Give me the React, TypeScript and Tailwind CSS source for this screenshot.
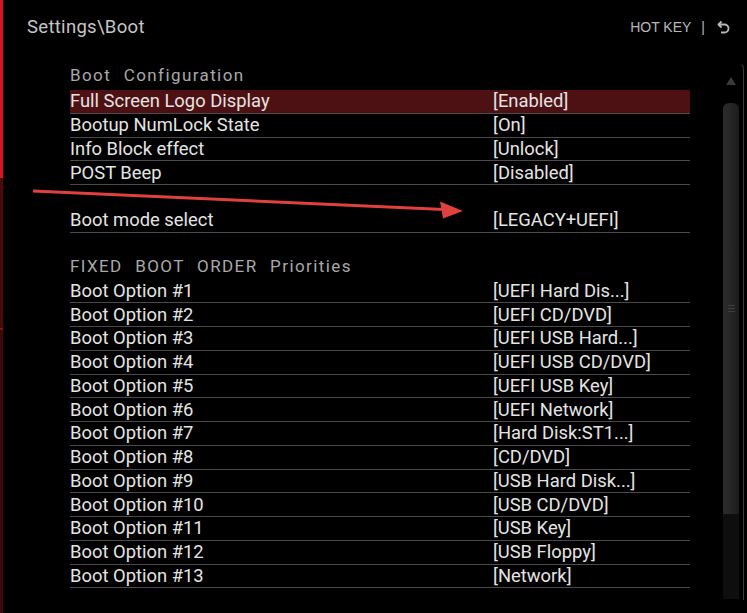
import React from 'react';

type Row = { label: string; value: string; active?: boolean };

const configRows: Row[] = [
  { label: 'Full Screen Logo Display', value: '[Enabled]', active: true },
  { label: 'Bootup NumLock State', value: '[On]' },
  { label: 'Info Block effect', value: '[Unlock]' },
  { label: 'POST Beep', value: '[Disabled]' },
];

const bootRows: Row[] = [
  { label: 'Boot Option #1', value: '[UEFI Hard Dis...]' },
  { label: 'Boot Option #2', value: '[UEFI CD/DVD]' },
  { label: 'Boot Option #3', value: '[UEFI USB Hard...]' },
  { label: 'Boot Option #4', value: '[UEFI USB CD/DVD]' },
  { label: 'Boot Option #5', value: '[UEFI USB Key]' },
  { label: 'Boot Option #6', value: '[UEFI Network]' },
  { label: 'Boot Option #7', value: '[Hard Disk:ST1...]' },
  { label: 'Boot Option #8', value: '[CD/DVD]' },
  { label: 'Boot Option #9', value: '[USB Hard Disk...]' },
  { label: 'Boot Option #10', value: '[USB CD/DVD]' },
  { label: 'Boot Option #11', value: '[USB Key]' },
  { label: 'Boot Option #12', value: '[USB Floppy]' },
  { label: 'Boot Option #13', value: '[Network]' },
];

const SettingRow = ({ label, value, active }: Row) => (
  <div className="h-[23.75px] flex flex-col">
    <div
      className={`flex-1 flex items-center text-[18.4px] leading-[20px] text-[#e4e4e4] whitespace-nowrap ${
        active ? 'bg-[#4e1113]' : ''
      }`}
    >
      <span className="w-[423px]">{label}</span>
      <span>{value}</span>
    </div>
    <div className="h-px bg-[#4a4a4a]" />
  </div>
);

const SectionTitle = ({ text, className }: { text: string; className: string }) => (
  <div className={className}>
    <div className="text-[17px] leading-[22px] text-[#a9a9a9] tracking-[1.4px] [word-spacing:7px] whitespace-nowrap">
      {text}
    </div>
  </div>
);

const BackIcon = () => (
  <svg width="13" height="14" viewBox="0 0 13 14" fill="none" stroke="#b8b8b8" strokeWidth="1.8">
    <path d="M4.5 1.5 L1.5 4.5 L4.5 7.5" strokeLinejoin="round" />
    <path d="M1.8 4.5 H7.5 a4 4 0 0 1 0 8 H4" />
  </svg>
);

const Scrollbar = () => (
  <div className="ml-[33px] mt-[7px] w-[21px] h-[538px] flex flex-col items-start border-r-[1.5px] border-t border-[#3c3c3c] rounded-tr-[7px] border-t-transparent">
    <div className="w-[16px] mt-[14px] flex justify-center">
      <div className="w-0 h-0 border-l-[5px] border-r-[5px] border-b-[8px] border-l-transparent border-r-transparent border-b-[#3a3a3a]" />
    </div>
    <div className="mt-[18px] w-[16px] h-[411px] rounded-t-[6px] bg-gradient-to-r from-[#2c2c2c] via-[#262626] to-[#1c1c1c] flex justify-center pt-[202px]">
      <div className="flex flex-col gap-[2px]">
        <div className="w-[7px] h-px bg-[#3e3e3e]" />
        <div className="w-[7px] h-px bg-[#3e3e3e]" />
        <div className="w-[7px] h-px bg-[#3e3e3e]" />
      </div>
    </div>
    <div className="w-[16px] h-[85px] bg-[#0e0e0e]" />
  </div>
);

export default function App() {
  return (
    <div className="relative w-[747px] h-[613px] bg-black overflow-hidden flex font-['Roboto',sans-serif]">
      <div className="w-[3px] flex flex-col">
        <div className="h-[178px] bg-[#d8161c]" />
        <div className="h-[150px] bg-[#4a0a0c]" />
        <div className="h-[2px] bg-[#8a1014]" />
        <div className="flex-1 bg-[#3e0809]" />
      </div>
      <div className="flex-1 flex flex-col">
        <div className="h-[55px] flex items-start justify-between pl-[24px] pr-[17px] pt-[16px]">
          <span className="text-[18.5px] leading-[22px] tracking-[0.3px] text-[#c6c6c6]">Settings\Boot</span>
          <div className="flex items-center gap-[10px] pt-[3px] text-[14px] leading-[16px] text-[#b8b8b8] font-['Liberation_Sans',sans-serif]">
            <span>HOT KEY</span>
            <span className="pr-[2px]">|</span>
            <BackIcon />
          </div>
        </div>
        <div className="flex">
          <div className="ml-[67px] w-[620px] flex flex-col">
            <SectionTitle text="Boot Configuration" className="h-[35px] pt-[9px]" />
            {configRows.map((r) => (
              <SettingRow key={r.label} {...r} />
            ))}
            <div className="h-[23.75px]" />
            <SettingRow label="Boot mode select" value="[LEGACY+UEFI]" />
            <SectionTitle text="FIXED BOOT ORDER Priorities" className="h-[47px] pt-[22px]" />
            {bootRows.map((r) => (
              <SettingRow key={r.label} {...r} />
            ))}
          </div>
          <Scrollbar />
        </div>
      </div>
      <svg className="absolute inset-0 pointer-events-none" width="747" height="613">
        <line x1="33" y1="191" x2="444" y2="209.6" stroke="#e0403e" strokeWidth="3" />
        <polygon points="463,211 440,201.5 443,218.5" fill="#e0403e" />
      </svg>
    </div>
  );
}
